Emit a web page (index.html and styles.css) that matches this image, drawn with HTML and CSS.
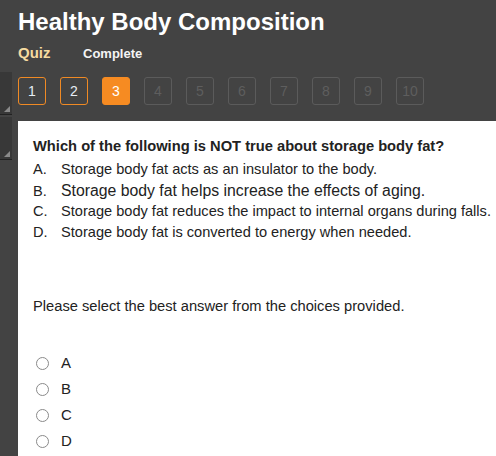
FILE: index.html
```html
<!DOCTYPE html>
<html>
<head>
<meta charset="utf-8">
<link rel="stylesheet" href="styles.css">
</head>
<body>
<div class="page">
  <aside class="side">
    <div class="panel"><span class="grip"></span></div>
    <div class="panel"><span class="grip"></span></div>
  </aside>
  <main class="main">
    <header class="head">
      <h1 class="title">Healthy Body Composition</h1>
      <div class="sub"><span class="quiz">Quiz</span><span class="status">Complete</span></div>
      <nav class="steps">
        <span class="step done">1</span>
        <span class="step done">2</span>
        <span class="step current">3</span>
        <span class="step off">4</span>
        <span class="step off">5</span>
        <span class="step off">6</span>
        <span class="step off">7</span>
        <span class="step off">8</span>
        <span class="step off">9</span>
        <span class="step off">10</span>
      </nav>
    </header>
    <section class="card">
      <p class="question">Which of the following is NOT true about storage body fat?</p>
      <div class="opts">
        <span class="key">A.</span><span class="opt">Storage body fat acts as an insulator to the body.</span>
        <span class="key">B.</span><span class="opt big">Storage body fat helps increase the effects of aging.</span>
        <span class="key">C.</span><span class="opt">Storage body fat reduces the impact to internal organs during falls.</span>
        <span class="key">D.</span><span class="opt">Storage body fat is converted to energy when needed.</span>
      </div>
      <p class="prompt">Please select the best answer from the choices provided.</p>
      <ul class="choices">
        <li class="choice"><span class="radio"></span><span class="lbl">A</span></li>
        <li class="choice"><span class="radio"></span><span class="lbl">B</span></li>
        <li class="choice"><span class="radio"></span><span class="lbl">C</span></li>
        <li class="choice"><span class="radio"></span><span class="lbl">D</span></li>
      </ul>
    </section>
  </main>
</div>
</body>
</html>
```
FILE: styles.css
```css
html, body {
  margin: 0;
  padding: 0;
  background: #434343;
  height: 100%;
  overflow: hidden;
}
body {
  font-family: "Liberation Sans", Arial, sans-serif;
}
.page {
  display: grid;
  grid-template-columns: 18px 1fr;
  height: 456px;
}
.side {
  padding-top: 72px;
  display: flex;
  flex-direction: column;
  gap: 2px;
}
.panel {
  width: 12px;
  height: 42px;
  background: #383838;
  border-bottom: 1px solid #222;
  position: relative;
}
.grip {
  position: absolute;
  right: 2px;
  bottom: 2px;
  width: 0;
  height: 0;
  border-left: 6px solid transparent;
  border-bottom: 6px solid #8a8a8a;
}
.main {
  display: flex;
  flex-direction: column;
  min-width: 0;
}
.head {
  padding-top: 8px;
}
.title {
  margin: 0;
  font-size: 24px;
  line-height: 28px;
  font-weight: bold;
  color: #ffffff;
}
.sub {
  margin-top: 8px;
  height: 18px;
  line-height: 18px;
  display: flex;
  align-items: baseline;
}
.quiz {
  font-size: 15px;
  font-weight: bold;
  color: #f6dba0;
  width: 65px;
}
.status {
  font-size: 13px;
  font-weight: bold;
  color: #f4f4f4;
}
.steps {
  margin-top: 15px;
  display: flex;
  gap: 14px;
}
.step {
  box-sizing: border-box;
  width: 28px;
  height: 28px;
  border-radius: 3px;
  display: flex;
  align-items: center;
  justify-content: center;
  font-size: 14px;
  border: 1px solid #5b5b5b;
  color: #5e5e5e;
}
.step.done {
  border-color: #f08a24;
  color: #e6eef6;
}
.step.current {
  border-color: #f68b22;
  background: #f68b22;
  color: #ffffff;
}
.card {
  margin-top: 16px;
  flex: 1;
  background: #ffffff;
  padding: 17px 0 0 15px;
  color: #222222;
}
.question {
  margin: 0;
  font-size: 14.7px;
  font-weight: bold;
  line-height: 17px;
}
.opts {
  margin-top: 4px;
  display: grid;
  grid-template-columns: 28px auto;
  grid-auto-rows: 21px;
  align-items: baseline;
  font-size: 14.6px;
}
.key, .opt {
  line-height: 21px;
  white-space: nowrap;
}
.opt.big {
  font-size: 15.8px;
}
.prompt {
  margin: 54px 0 0 0;
  font-size: 14.7px;
  line-height: 18px;
}
.choices {
  list-style: none;
  margin: 35px 0 0 0;
  padding: 0;
}
.choice {
  display: flex;
  align-items: center;
  height: 26px;
  font-size: 15px;
}
.radio {
  box-sizing: border-box;
  width: 13px;
  height: 13px;
  border: 1px solid #8a8a8a;
  border-radius: 50%;
  margin-left: 3px;
  margin-right: 12px;
}
.lbl {
  line-height: 18px;
}
```
